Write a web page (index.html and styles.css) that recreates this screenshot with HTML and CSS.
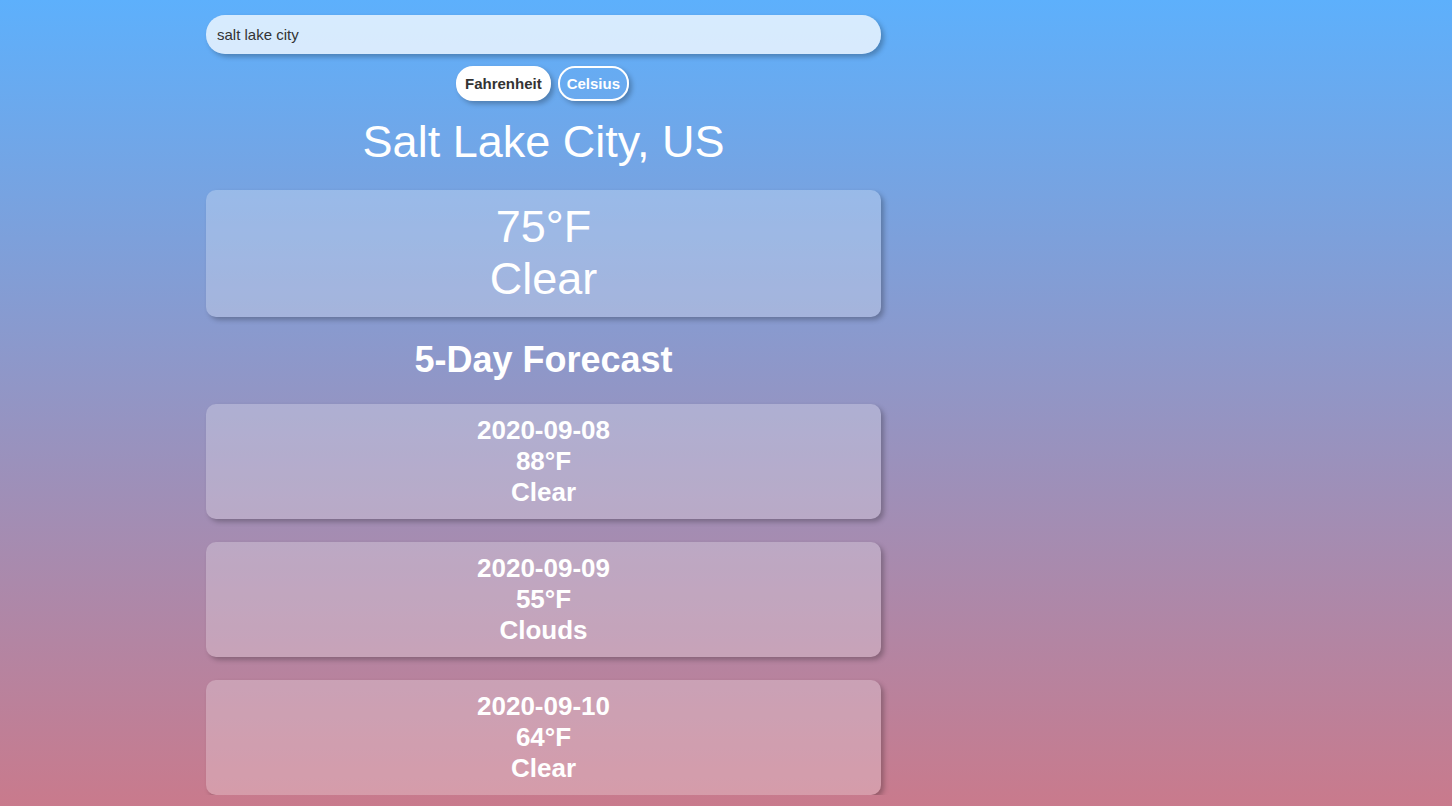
FILE: index.html
```html
<!DOCTYPE html>
<html lang="en">
<head>
<meta charset="utf-8">
<title>Weather</title>
<link rel="stylesheet" href="styles.css">
</head>
<body>
<main class="app">
  <input class="search" type="text" value="salt lake city">
  <div class="units">
    <button class="unit unit-active">Fahrenheit</button>
    <button class="unit">Celsius</button>
  </div>
  <h1 class="city">Salt Lake City, US</h1>
  <section class="card current">
    <div class="current-temp">75°F</div>
    <div class="current-desc">Clear</div>
  </section>
  <h2 class="forecast-title">5-Day Forecast</h2>
  <div class="forecast-list">
    <section class="card day">
      <div>2020-09-08</div>
      <div>88°F</div>
      <div>Clear</div>
    </section>
    <section class="card day">
      <div>2020-09-09</div>
      <div>55°F</div>
      <div>Clouds</div>
    </section>
    <section class="card day">
      <div>2020-09-10</div>
      <div>64°F</div>
      <div>Clear</div>
    </section>
  </div>
</main>
</body>
</html>
```
FILE: styles.css
```css
html {
  min-height: 100%;
  background: linear-gradient(180deg, #5db0fc 0%, #c97a8c 100%) fixed;
}
body {
  margin: 0;
  font-family: "Liberation Sans", Arial, sans-serif;
  color: #fff;
}
.app {
  width: 675px;
  margin-left: 206px;
  padding-top: 15px;
  display: flex;
  flex-direction: column;
  align-items: stretch;
}
.search {
  box-sizing: border-box;
  height: 39px;
  border: none;
  border-radius: 19px;
  background: rgba(255, 255, 255, 0.75);
  padding: 0 11px;
  font-family: "Liberation Sans", Arial, sans-serif;
  font-size: 15px;
  color: #333;
  box-shadow: 3px 3px 5px rgba(0, 0, 0, 0.25);
  outline: none;
}
.units {
  display: flex;
  justify-content: center;
  gap: 7px;
  margin-top: 12px;
  padding-right: 2px;
}
.unit {
  box-sizing: border-box;
  height: 35px;
  padding: 0 7px;
  border: 2px solid #fff;
  border-radius: 17px;
  background: transparent;
  color: #fff;
  font-family: "Liberation Sans", Arial, sans-serif;
  font-size: 15px;
  font-weight: bold;
  box-shadow: 3px 3px 5px rgba(0, 0, 0, 0.25);
}
.unit-active {
  background: #fff;
  color: #333;
}
.city {
  margin: 15px 0 0;
  text-align: center;
  font-size: 45px;
  font-weight: normal;
  line-height: 52px;
}
.card {
  background: rgba(255, 255, 255, 0.25);
  border-radius: 10px;
  box-shadow: 3px 3px 5px rgba(0, 0, 0, 0.25);
  text-align: center;
}
.current {
  margin-top: 22px;
  padding: 11px 0 12px;
  font-size: 45px;
  line-height: 52px;
}
.forecast-title {
  margin: 22px 0 0;
  text-align: center;
  font-size: 36px;
  line-height: 41px;
  font-weight: bold;
}
.forecast-list {
  margin-top: 24px;
  display: flex;
  flex-direction: column;
  gap: 23px;
}
.day {
  padding: 11px 0;
  font-size: 26px;
  line-height: 31px;
  font-weight: bold;
}
```
